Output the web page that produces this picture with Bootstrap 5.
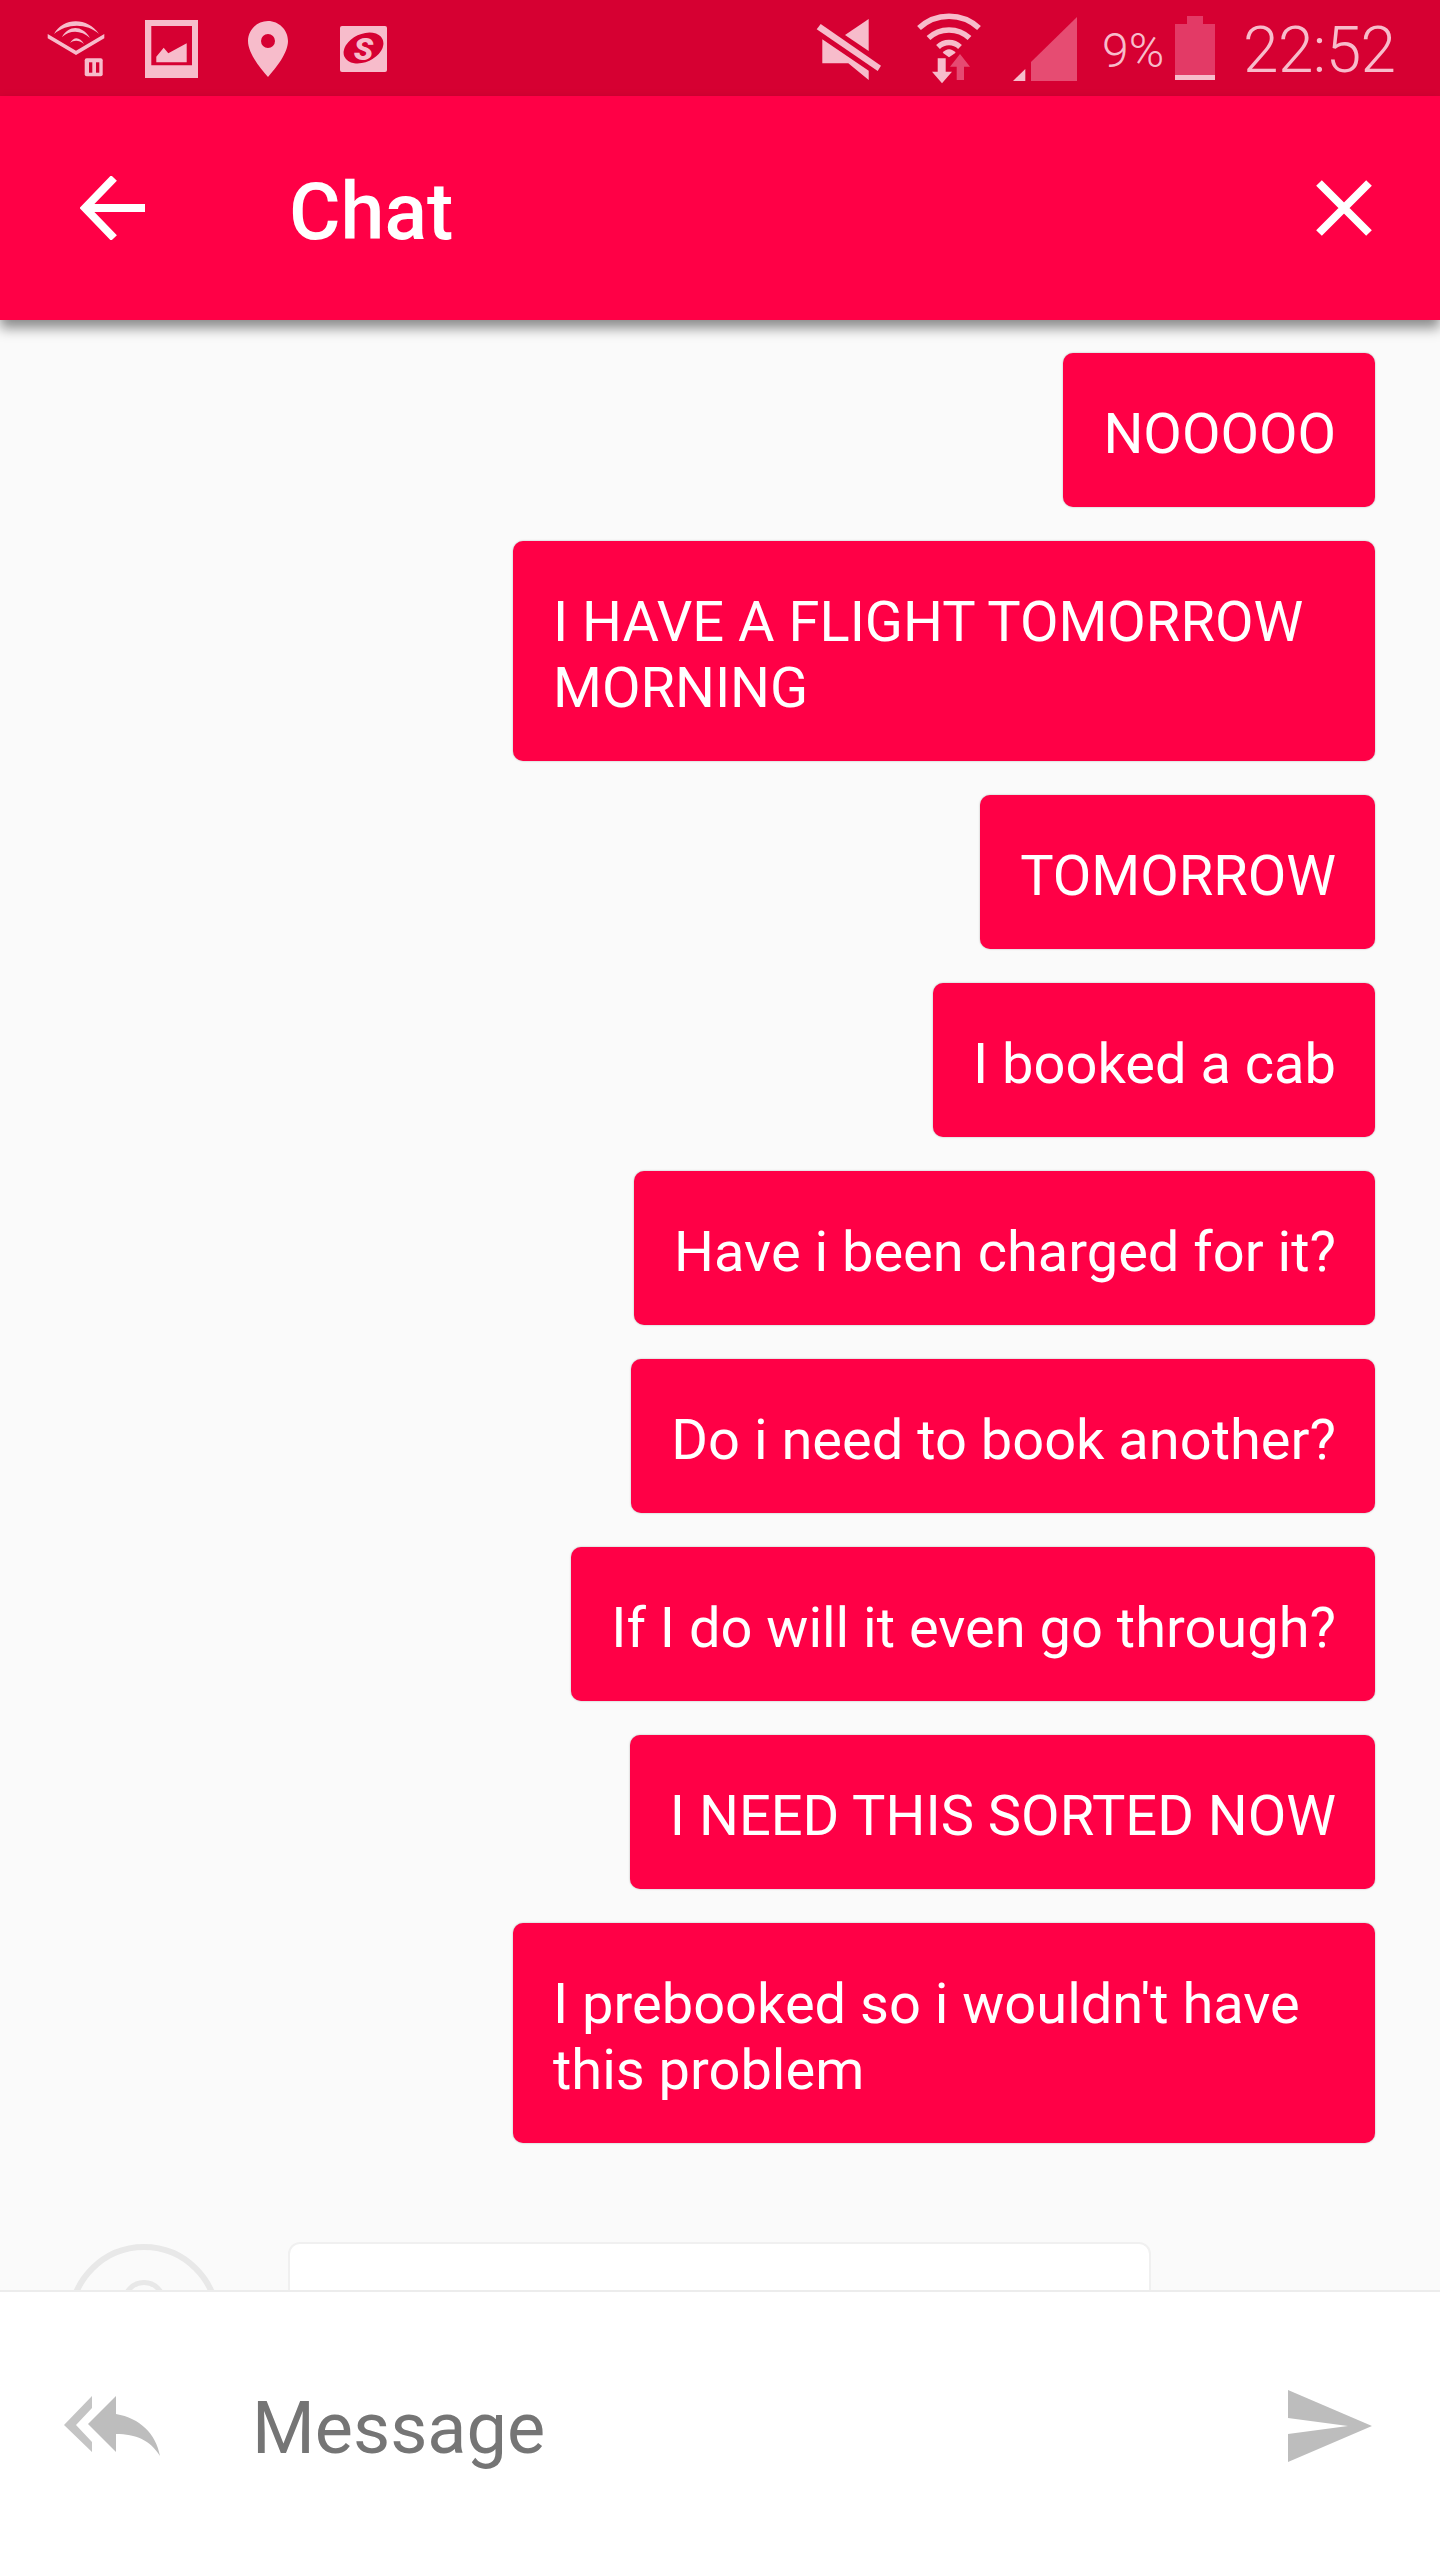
<!DOCTYPE html>
<html lang="en">
<head>
  <meta charset="UTF-8" />
  <title>Chat</title>
  <link href="https://cdn.jsdelivr.net/npm/bootstrap@5.3.0/dist/css/bootstrap.min.css" rel="stylesheet" />
  <style>
    body {
      margin: 0;
      background-color: #fafafa;
      font-family: Roboto, "Liberation Sans", sans-serif;
    }

    .phone-screen {
      width: 1440px;
      height: 2560px;
      overflow: hidden;
    }

    .status-strip {
      height: 96px;
      background-color: #d60032;
      color: #f7bccb;
      position: relative;
    }

    .status-icon {
      position: absolute;
      display: block;
    }

    .status-pct {
      position: absolute;
      left: 1102px;
      top: 25px;
      font-size: 48px;
      line-height: 52px;
      font-weight: 300;
    }

    .status-clock {
      position: absolute;
      left: 1243px;
      top: 13px;
      font-size: 64px;
      line-height: 75px;
      font-weight: 300;
      letter-spacing: -0.6px;
    }

    .app-header {
      height: 224px;
      background-color: #ff0046;
      color: #fff;
      padding-left: 80px;
      padding-right: 68px;
      box-shadow: 0 8px 12px rgba(0, 0, 0, 0.45);
      position: relative;
      z-index: 2;
    }

    .app-title {
      font-size: 79px;
      font-weight: 500;
      line-height: 94px;
      margin-left: 144px;
      margin-top: 8px;
    }

    .chat-area {
      background-color: #fafafa;
      padding: 33px 65px 0 0;
      overflow: hidden;
      min-height: 0;
    }

    .chat-bubble {
      background-color: #ff0046;
      color: #fff;
      font-size: 56px;
      line-height: 66px;
      padding: 48px 39px 40px 40px;
      border-radius: 10px;
      max-width: 862px;
      box-shadow: 0 0 2px rgba(0, 0, 0, 0.3);
    }

    .bubble-wide {
      width: 862px;
    }

    .incoming-row {
      margin-top: 99px;
      margin-left: 68px;
      gap: 68px;
    }

    .agent-avatar {
      width: 152px;
      height: 152px;
      border-radius: 50%;
      border: 6px solid #e8e8e8;
      background-color: #fafafa;
      flex: none;
      display: flex;
      justify-content: center;
      padding-top: 30px;
      margin-top: 2px;
    }

    .agent-head {
      width: 44px;
      height: 44px;
      border-radius: 50%;
      border: 5px solid #e8e8e8;
    }

    .incoming-card {
      width: 863px;
      height: 200px;
      background-color: #fff;
      border: 2px solid #f0f0f0;
      border-radius: 12px;
    }

    .composer {
      height: 270px;
      background-color: #fff;
      border-top: 2px solid #ececec;
      padding-left: 64px;
      padding-right: 68px;
      position: relative;
      z-index: 2;
    }

    .composer-text {
      font-size: 72px;
      line-height: 84px;
      color: #757575;
      margin-left: 92px;
      margin-top: 5px;
    }
  </style>
</head>
<body>
  <div class="phone-screen d-flex flex-column">

    <div class="status-strip flex-shrink-0">
      <!-- wifi book with pause badge -->
      <svg class="status-icon" style="left:47px;top:20px" width="58" height="58" viewBox="0 0 58 58" fill="currentColor">
        <path d="M7 14C16 -3 41 -3 52 14C40 3 20 3 7 14Z"/>
        <path d="M15 17C22 5 35 5 43 18C34 10 23 10 15 17Z"/>
        <path d="M23 23C27 16 33 17 37 24C32 20 27 20 23 23Z"/>
        <path d="M0.7 14L29 30.7L57.3 14V18.3L29 35L0.7 18.3Z"/>
        <rect x="37.7" y="38.3" width="18" height="18" rx="2"/>
        <rect x="42" y="42.3" width="3.3" height="10.4" fill="#d60032"/>
        <rect x="49" y="42.3" width="3.3" height="10.4" fill="#d60032"/>
      </svg>
      <!-- picture -->
      <svg class="status-icon" style="left:145px;top:20px" width="53" height="58" viewBox="0 0 53 58">
        <path fill="currentColor" fill-rule="evenodd" d="M0 0H53V58H0Z M6.3 6V45.3H47V6Z"/>
        <path fill="currentColor" d="M11.3 42.3V36.7L18.7 27.7L23.3 33.3L41.7 23.3V42.3Z"/>
      </svg>
      <!-- pin -->
      <svg class="status-icon" style="left:248px;top:21px" width="40" height="56" viewBox="0 0 40 56">
        <path fill="currentColor" fill-rule="evenodd" d="M20 0C31 0 40 9 40 20C40 32 28 47 20 56C12 47 0 32 0 20C0 9 9 0 20 0Z M20 13A7 7 0 1 0 20 27A7 7 0 1 0 20 13Z"/>
      </svg>
      <!-- s card -->
      <svg class="status-icon" style="left:340px;top:26px" width="47" height="46" viewBox="0 0 47 46">
        <rect width="47" height="46" rx="2" fill="currentColor"/>
        <ellipse cx="23.5" cy="22" rx="21" ry="14" transform="rotate(-25 23.5 22)" fill="#d60032"/>
        <text x="23.5" y="34" text-anchor="middle" font-family="Roboto" font-weight="900" font-style="italic" font-size="32" fill="currentColor">S</text>
      </svg>
      <!-- mute -->
      <svg class="status-icon" style="left:817px;top:19px;overflow:visible" width="64" height="62" viewBox="0 0 64 62" fill="currentColor">
        <path d="M28 16L51.7 0V32Z"/>
        <path d="M5.3 20.3L51.7 51.7V61L31.3 44.3H5.3Z"/>
        <path d="M3.7 5L64 46.7L60.7 52L-0.3 10.3Z"/>
      </svg>
      <!-- wifi with arrows -->
      <svg class="status-icon" style="left:916px;top:13px" width="66" height="72" viewBox="0 0 66 72" fill="none" stroke="currentColor" stroke-width="5.5">
        <path d="M3 15A44 44 0 0 1 63 15"/>
        <path d="M12.5 25A30 30 0 0 1 53.5 25"/>
        <path d="M22 34A16 16 0 0 1 44 34"/>
        <path d="M26.7 39.7L33 44.3L39.7 39.7C36 35 30 35 26.7 39.7Z" fill="currentColor" stroke="none"/>
        <path d="M21.7 45.3H29.7V58.7H36L26 70.3L16 58.7H21.7Z" fill="currentColor" stroke="none"/>
        <path d="M44 41L54 53.7H48V67H40.7V53.7H34Z" fill="#e64a72" stroke="none"/>
      </svg>
      <!-- signal -->
      <svg class="status-icon" style="left:1013px;top:17px" width="64" height="64" viewBox="0 0 64 64">
        <path fill="#e64c72" d="M64 0V64H18V45Z"/>
        <path fill="#f7bccb" d="M12.3 52V64H0Z"/>
      </svg>
      <span class="status-pct">9%</span>
      <!-- battery -->
      <svg class="status-icon" style="left:1175px;top:16px" width="40" height="64" viewBox="0 0 40 64">
        <path fill="#e33a66" d="M12 0H28V8H40V59H0V8H12Z"/>
        <rect y="59" width="40" height="5" fill="#f7bccb"/>
      </svg>
      <span class="status-clock">22:52</span>
    </div>

    <div class="app-header d-flex align-items-center flex-shrink-0">
      <svg width="65" height="64" viewBox="0 0 65 64" fill="none" stroke="#fff" stroke-width="8" class="flex-shrink-0">
        <path d="M65 32H6"/>
        <path d="M34 2L5 32L34 62"/>
      </svg>
      <div class="app-title flex-grow-1">Chat</div>
      <svg width="56" height="56" viewBox="0 0 56 56" fill="none" stroke="#fff" stroke-width="8" class="flex-shrink-0">
        <path d="M3 3L53 53M53 3L3 53"/>
      </svg>
    </div>

    <div class="chat-area flex-grow-1">
      <div class="d-flex flex-column align-items-end" style="gap:34px">
        <div class="chat-bubble">NOOOOO</div>
        <div class="chat-bubble bubble-wide">I HAVE A FLIGHT TOMORROW MORNING</div>
        <div class="chat-bubble">TOMORROW</div>
        <div class="chat-bubble">I booked a cab</div>
        <div class="chat-bubble">Have i been charged for it?</div>
        <div class="chat-bubble">Do i need to book another?</div>
        <div class="chat-bubble">If I do will it even go through?</div>
        <div class="chat-bubble">I NEED THIS SORTED NOW</div>
        <div class="chat-bubble bubble-wide">I prebooked so i wouldn't have this problem</div>
      </div>
      <div class="incoming-row d-flex align-items-start">
        <div class="agent-avatar"><div class="agent-head"></div></div>
        <div class="incoming-card"></div>
      </div>
    </div>

    <div class="composer d-flex align-items-center flex-shrink-0">
      <svg width="96" height="60" viewBox="0 0 96 60" class="flex-shrink-0">
        <path fill="#c4c4c4" d="M28 0V12L12 29L28 46V56L0 29Z"/>
        <path fill="#bdbdbd" d="M52 0V18C76 22 92 38 96 60C86 44 72 38 52 38V56L24 28Z"/>
      </svg>
      <div class="composer-text flex-grow-1">Message</div>
      <svg width="84" height="72" viewBox="0 0 84 72" class="flex-shrink-0">
        <path fill="#bdbdbd" d="M0 0L84 36L0 72V44L60 36L0 28Z"/>
      </svg>
    </div>
  </div>

  <script src="https://cdn.jsdelivr.net/npm/bootstrap@5.3.0/dist/js/bootstrap.bundle.min.js"></script>
</body>
</html>
